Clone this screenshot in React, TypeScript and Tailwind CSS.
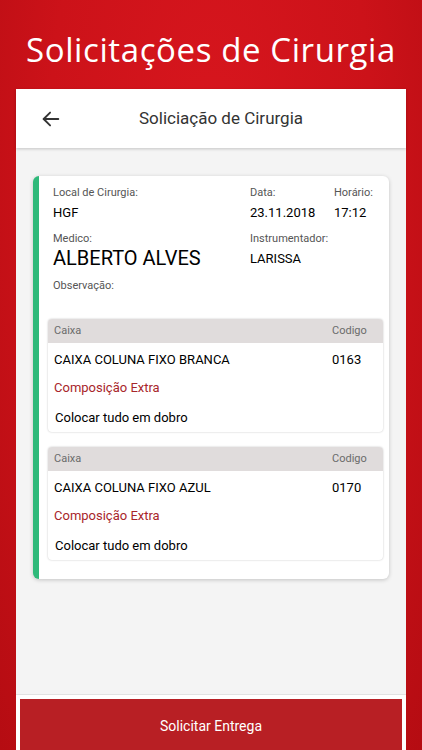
import React from 'react';

interface Caixa {
    nome: string;
    codigo: string;
    extra: string;
}

const caixas: Caixa[] = [
    { nome: 'CAIXA COLUNA FIXO BRANCA', codigo: '0163', extra: 'Colocar tudo em dobro' },
    { nome: 'CAIXA COLUNA FIXO AZUL', codigo: '0170', extra: 'Colocar tudo em dobro' },
];

const sans = { fontFamily: 'Roboto, "Liberation Sans", sans-serif' };

function CaixaBox({ caixa }: { caixa: Caixa }) {
    return (
        <div className="ml-[9px] mr-[6px] rounded-[4px] bg-white shadow-[0_0_2px_rgba(0,0,0,0.25)] overflow-hidden">
            <div className="flex h-[24px] items-center bg-[#e0dcdc] pl-[6px] text-[11px] text-[#6b6b6b]">
                <span className="flex-1">Caixa</span>
                <span className="w-[51px]">Codigo</span>
            </div>
            <div className="flex h-[34px] items-center pl-[6px] text-[13px] text-black">
                <span className="flex-1">{caixa.nome}</span>
                <span className="w-[51px]">{caixa.codigo}</span>
            </div>
            <div className="flex h-[22px] items-center pl-[6px] text-[13px] text-[#a8262b]">
                Composição Extra
            </div>
            <div className="h-[33px] pl-[7px] pt-[11px] text-[13px] leading-[16px] text-black">
                {caixa.extra}
            </div>
        </div>
    );
}

export default function App() {
    return (
        <div
            className="flex h-[750px] w-full flex-col overflow-hidden bg-[#cf141b] bg-[radial-gradient(ellipse_at_50%_25%,#d8161e_0%,#cc1219_55%,#b50c12_100%)]"
            style={sans}
        >
            <div className="flex h-[89px] shrink-0 items-center justify-center pt-[10px]">
                <h1
                    className="text-[33px] tracking-[0.6px] text-white"
                    style={{ fontFamily: '"Open Sans", Lato, sans-serif' }}
                >
                    Solicitações de Cirurgia
                </h1>
            </div>

            <div className="mx-4 flex flex-1 flex-col bg-[#f4f4f4]">
                {/* Header */}
                <div className="relative z-10 flex h-[59px] shrink-0 items-center bg-white shadow-[0_1px_3px_rgba(0,0,0,0.2)]">
                    <svg className="ml-[24px] h-[22px] w-[22px]" viewBox="0 0 24 24" fill="none" stroke="#333" strokeWidth="2" strokeLinecap="round" strokeLinejoin="round">
                        <path d="M20 12H4" />
                        <path d="M11 5l-7 7 7 7" />
                    </svg>
                    <div className="flex-1 pr-[26px] text-center text-[17px] text-[#333]">
                        Soliciação de Cirurgia
                    </div>
                </div>

                {/* Content */}
                <div className="flex-1 px-[17px] pt-[28px]">
                    <div className="rounded-[6px] border-l-[6px] border-[#2fb97a] bg-white pb-[19px] pt-[10px] shadow-[0_1px_4px_rgba(0,0,0,0.2)]">
                        <div className="pl-[14px]">
                            <div className="flex">
                                <div className="w-[197px]">
                                    <div className="text-[11px] leading-[14px] text-[#555]">Local de Cirurgia:</div>
                                    <div className="mt-[5px] text-[13px] leading-[16px] text-black">HGF</div>
                                </div>
                                <div className="w-[84px]">
                                    <div className="text-[11px] leading-[14px] text-[#555]">Data:</div>
                                    <div className="mt-[5px] text-[13px] leading-[16px] text-black">23.11.2018</div>
                                </div>
                                <div>
                                    <div className="text-[11px] leading-[14px] text-[#555]">Horário:</div>
                                    <div className="mt-[5px] text-[13px] leading-[16px] text-black">17:12</div>
                                </div>
                            </div>
                            <div className="mt-[11px] flex">
                                <div className="w-[197px]">
                                    <div className="text-[11px] leading-[14px] text-[#555]">Medico:</div>
                                    <div className="text-[20px] leading-[24px] text-black">ALBERTO ALVES</div>
                                </div>
                                <div>
                                    <div className="text-[11px] leading-[14px] text-[#555]">Instrumentador:</div>
                                    <div className="mt-[5px] text-[13px] leading-[16px] text-black">LARISSA</div>
                                </div>
                            </div>
                            <div className="mt-[9px] text-[11px] leading-[14px] text-[#555]">Observação:</div>
                        </div>

                        <div className="mt-[26px] flex flex-col gap-[15px]">
                            {caixas.map((c) => (
                                <CaixaBox key={c.codigo} caixa={c} />
                            ))}
                        </div>
                    </div>
                </div>

                {/* Footer */}
                <div className="h-[56px] shrink-0 border-t border-[#e2e2e2] bg-white px-[4px] pt-[4px]">
                    <button className="flex h-full w-full items-center justify-center bg-[#b81f24] pt-[3px] text-[14px] text-white">
                        Solicitar Entrega
                    </button>
                </div>
            </div>
        </div>
    );
}
